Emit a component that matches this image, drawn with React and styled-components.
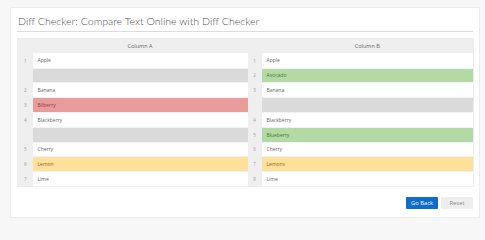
import React from "react";
import styled, { createGlobalStyle } from "styled-components";

const GlobalStyle = createGlobalStyle`
  html, body {
    margin: 0;
    padding: 0;
    background: #f7f7f7;
  }
  body {
    font-family: "Open Sans", "Liberation Sans", sans-serif;
    color: #555;
  }
`;

const rows = [
  { a: "Apple", na: 1, b: "Apple", nb: 1 },
  { a: null, b: "Avocado", nb: 2, kind: "added" },
  { a: "Banana", na: 2, b: "Banana", nb: 3 },
  { a: "Bilberry", na: 3, b: null, kind: "removed" },
  { a: "Blackberry", na: 4, b: "Blackberry", nb: 4 },
  { a: null, b: "Blueberry", nb: 5, kind: "added" },
  { a: "Cherry", na: 5, b: "Cherry", nb: 6 },
  { a: "Lemon", na: 6, b: "Lemons", nb: 7, kind: "changed" },
  { a: "Lime", na: 7, b: "Lime", nb: 8 },
];

const tones = {
  empty: { bg: "#dadada", fg: "#555" },
  removed: { bg: "#e89c9c", fg: "#9c3b3b" },
  added: { bg: "#b3d9a4", fg: "#3f7a35" },
  changed: { bg: "#fde09a", fg: "#8a6a24" },
  plain: { bg: "#ffffff", fg: "#666" },
};

const sideTone = (text, kind, side) => {
  if (text === null) return "empty";
  if (kind === "changed") return "changed";
  if (kind === "removed" && side === "a") return "removed";
  if (kind === "added" && side === "b") return "added";
  return "plain";
};

const DiffPage = () => (
  <Page>
    <GlobalStyle />
    <Card>
      <Title>Diff Checker: Compare Text Online with Diff Checker</Title>
      <DiffTable>
        <colgroup>
          <col style={{ width: 15 }} />
          <col style={{ width: 215 }} />
          <col style={{ width: 14 }} />
          <col style={{ width: 212 }} />
        </colgroup>
        <thead>
          <tr>
            <HeadCell />
            <HeadCell>Column A</HeadCell>
            <HeadCell />
            <HeadCell>Column B</HeadCell>
          </tr>
        </thead>
        <tbody>
          {rows.map((r, i) => {
            const ta = sideTone(r.a, r.kind, "a");
            const tb = sideTone(r.b, r.kind, "b");
            return (
              <tr key={i}>
                <NumCell>{r.na ?? ""}</NumCell>
                <TextCell $tone={ta}>{r.a ?? ""}</TextCell>
                <NumCell>{r.nb ?? ""}</NumCell>
                <TextCell $tone={tb}>{r.b ?? ""}</TextCell>
              </tr>
            );
          })}
        </tbody>
      </DiffTable>
      <Actions>
        <Button $primary>Go Back</Button>
        <Button>Reset</Button>
      </Actions>
    </Card>
  </Page>
);

const Page = styled.div`
  width: 485px;
  height: 220px;
  padding: 7px 5px 0 10px;
  box-sizing: border-box;
`;

const Card = styled.div`
  width: 470px;
  height: 211px;
  box-sizing: border-box;
  background: #fff;
  border: 1px solid #ececec;
  padding: 0 6px;
  display: flex;
  flex-direction: column;
`;

const Title = styled.h1`
  margin: 0;
  font-family: Lato, "Open Sans", sans-serif;
  font-size: 10.6px;
  font-weight: 300;
  color: #4f4f4f;
  line-height: 12px;
  padding: 7px 0 4px 1px;
  border-bottom: 1px solid #dcdcdc;
  white-space: nowrap;
`;

const DiffTable = styled.table`
  margin-top: 6px;
  width: 456px;
  table-layout: fixed;
  border-collapse: collapse;
  border: 1px solid #ececec;
  font-size: 5px;

  tr {
    height: 14.8px;
  }
`;

const HeadCell = styled.th`
  background: #efefef;
  font-weight: 400;
  font-size: 5.5px;
  color: #666;
  text-align: center;
  padding: 0;
`;

const NumCell = styled.td`
  background: #efefef;
  color: #999;
  text-align: center;
  padding: 0;
  font-size: 4.5px;
`;

const TextCell = styled.td`
  background: ${(p) => tones[p.$tone].bg};
  color: ${(p) => tones[p.$tone].fg};
  padding: 0 0 0 5px;
  border-bottom: 1px solid #f2f2f2;
  white-space: nowrap;
`;

const Actions = styled.div`
  display: flex;
  justify-content: flex-end;
  gap: 3px;
  margin-top: 10px;
`;

const Button = styled.button`
  width: 32px;
  height: 12px;
  padding: 0;
  border: none;
  border-radius: 1px;
  font-family: "Open Sans", "Liberation Sans", sans-serif;
  font-size: 5.8px;
  background: ${(p) => (p.$primary ? "#0e6ccb" : "#eeeeee")};
  color: ${(p) => (p.$primary ? "#fff" : "#888")};
`;

export default DiffPage;
